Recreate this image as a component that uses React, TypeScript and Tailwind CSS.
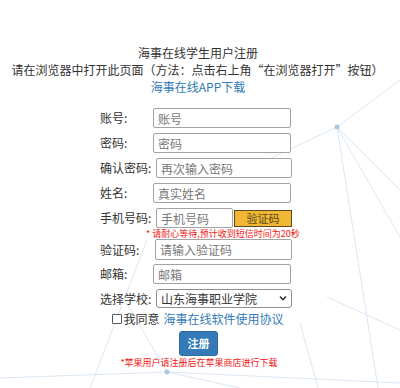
import { useState } from "react";

const font = {
  fontFamily: '"Noto Sans CJK SC", "Noto Sans", "Liberation Sans", sans-serif',
};

interface Field {
  label: string;
  placeholder: string;
  labelWidth: string;
  inputWidth: string;
  type?: string;
}

const topFields: Field[] = [
  { label: "账号:", placeholder: "账号", labelWidth: "w-[53px]", inputWidth: "w-[138px]" },
  { label: "密码:", placeholder: "密码", labelWidth: "w-[53px]", inputWidth: "w-[138px]", type: "password" },
  { label: "确认密码:", placeholder: "再次输入密码", labelWidth: "w-[56px]", inputWidth: "w-[136px]", type: "password" },
  { label: "姓名:", placeholder: "真实姓名", labelWidth: "w-[53px]", inputWidth: "w-[138px]" },
];

function Background() {
  const lines: [number, number, number, number][] = [
    [337, 127, 400, 80],
    [337, 127, 400, 190],
    [337, 127, 400, 237],
    [337, 127, 378, 388],
    [337, 127, 250, 168],
    [167, 372, 125, 300],
    [167, 372, 0, 378],
    [167, 372, 400, 383],
    [167, 372, 240, 388],
    [147, 240, 90, 388],
    [300, 323, 318, 388],
    [327, 297, 400, 330],
  ];
  return (
    <svg
      className="absolute inset-0 pointer-events-none"
      width="400"
      height="388"
      viewBox="0 0 400 388"
    >
      {lines.map(([x1, y1, x2, y2], i) => (
        <line
          key={i}
          x1={x1}
          y1={y1}
          x2={x2}
          y2={y2}
          stroke="#dbe7f2"
          strokeWidth="1"
        />
      ))}
      <circle cx="337" cy="127" r="2.5" fill="#a9c7e3" />
      <circle cx="167" cy="372" r="2.5" fill="#a9c7e3" />
    </svg>
  );
}

export default function App() {
  const [agree, setAgree] = useState(false);

  return (
    <div
      className="relative w-[400px] h-[388px] overflow-hidden bg-white text-[#333] text-xs"
      style={font}
    >
      <Background />

      <div className="relative pt-[44px]">
        <div className="text-center leading-[17px]">
          <div className="-ml-[4px]">海事在线学生用户注册</div>
          <div className="-ml-[5px] whitespace-nowrap">
            请在浏览器中打开此页面（方法：点击右上角“在浏览器打开”按钮）
          </div>
          <a href="#" className="-ml-[4px] text-[#337ab7]">
            海事在线APP下载
          </a>
        </div>

        <form className="mt-[13px] pl-[100px]" onSubmit={(e) => e.preventDefault()}>
          {topFields.map((f) => (
            <div key={f.label} className="flex items-center h-[20px] mb-[5px]">
              <label className={`${f.labelWidth} shrink-0 whitespace-nowrap`}>
                {f.label}
              </label>
              <input
                type={f.type ?? "text"}
                placeholder={f.placeholder}
                className={`${f.inputWidth} h-[20px] border border-[#a3a3a3] rounded-[2px] bg-white px-[4px] text-xs placeholder:text-[#777] outline-none`}
              />
            </div>
          ))}

          <div className="flex items-center h-[20px]">
            <label className="w-[56px] shrink-0 whitespace-nowrap">手机号码:</label>
            <input
              type="text"
              placeholder="手机号码"
              className="w-[77px] h-[20px] border border-[#a3a3a3] rounded-[2px] bg-white px-[4px] text-xs placeholder:text-[#777] outline-none"
            />
            <button
              type="button"
              className="ml-[1px] w-[58px] h-[17px] bg-[#f0b634] border border-[#5c4a1e] text-[11px] leading-none text-[#5a4a20]"
            >
              验证码
            </button>
          </div>
          <div className="-ml-[53px] pl-[99px] text-[9px] leading-[11px] text-[#f01414] whitespace-nowrap">
            * 请耐心等待,预计收到短信时间为20秒
          </div>

          <div className="flex items-center h-[21px] mb-[4px]">
            <label className="w-[55px] shrink-0 whitespace-nowrap">验证码:</label>
            <input
              type="text"
              placeholder="请输入验证码"
              className="w-[137px] h-[21px] border border-[#a3a3a3] rounded-[2px] bg-white px-[4px] text-xs placeholder:text-[#777] outline-none"
            />
          </div>
          <div className="flex items-center h-[20px] mb-[5px]">
            <label className="w-[53px] shrink-0 whitespace-nowrap">邮箱:</label>
            <input
              type="text"
              placeholder="邮箱"
              className="w-[138px] h-[20px] border border-[#a3a3a3] rounded-[2px] bg-white px-[4px] text-xs placeholder:text-[#777] outline-none"
            />
          </div>
          <div className="flex items-center h-[19px]">
            <label className="w-[56px] shrink-0 whitespace-nowrap">选择学校:</label>
            <div className="relative w-[136px] h-[19px]">
              <select
                defaultValue="sd"
                className="appearance-none w-full h-full border border-[#8f8f8f] rounded-[3px] bg-white pl-[4px] text-xs text-[#333] outline-none"
              >
                <option value="sd">山东海事职业学院</option>
              </select>
              <svg
                className="absolute right-[5px] top-[6px] pointer-events-none"
                width="8"
                height="6"
                viewBox="0 0 8 6"
              >
                <path d="M1 1.5 L4 4.5 L7 1.5" fill="none" stroke="#333" strokeWidth="1.6" />
              </svg>
            </div>
          </div>
        </form>

        <div className="mt-[2px] flex items-center justify-center leading-[17px] -ml-[4px]">
          <input
            type="checkbox"
            checked={agree}
            onChange={(e) => setAgree(e.target.checked)}
            className="appearance-none w-[10px] h-[10px] border border-[#555] rounded-[1px] bg-white mr-[1px]"
          />
          <span>我同意</span>
          <a href="#" className="ml-[4px] text-[#337ab7]">
            海事在线软件使用协议
          </a>
        </div>

        <div className="mt-[4px] flex justify-center -ml-[3px]">
          <button
            type="button"
            className="w-[39px] h-[25px] rounded-[3px] bg-[#337ab7] border border-[#2e6da4] text-white text-[11px] font-bold"
          >
            注册
          </button>
        </div>
        <div className="mt-[1px] text-center text-[9px] leading-[11px] text-[#f01414] -ml-[2px]">
          *苹果用户请注册后在苹果商店进行下载
        </div>
      </div>
    </div>
  );
}
